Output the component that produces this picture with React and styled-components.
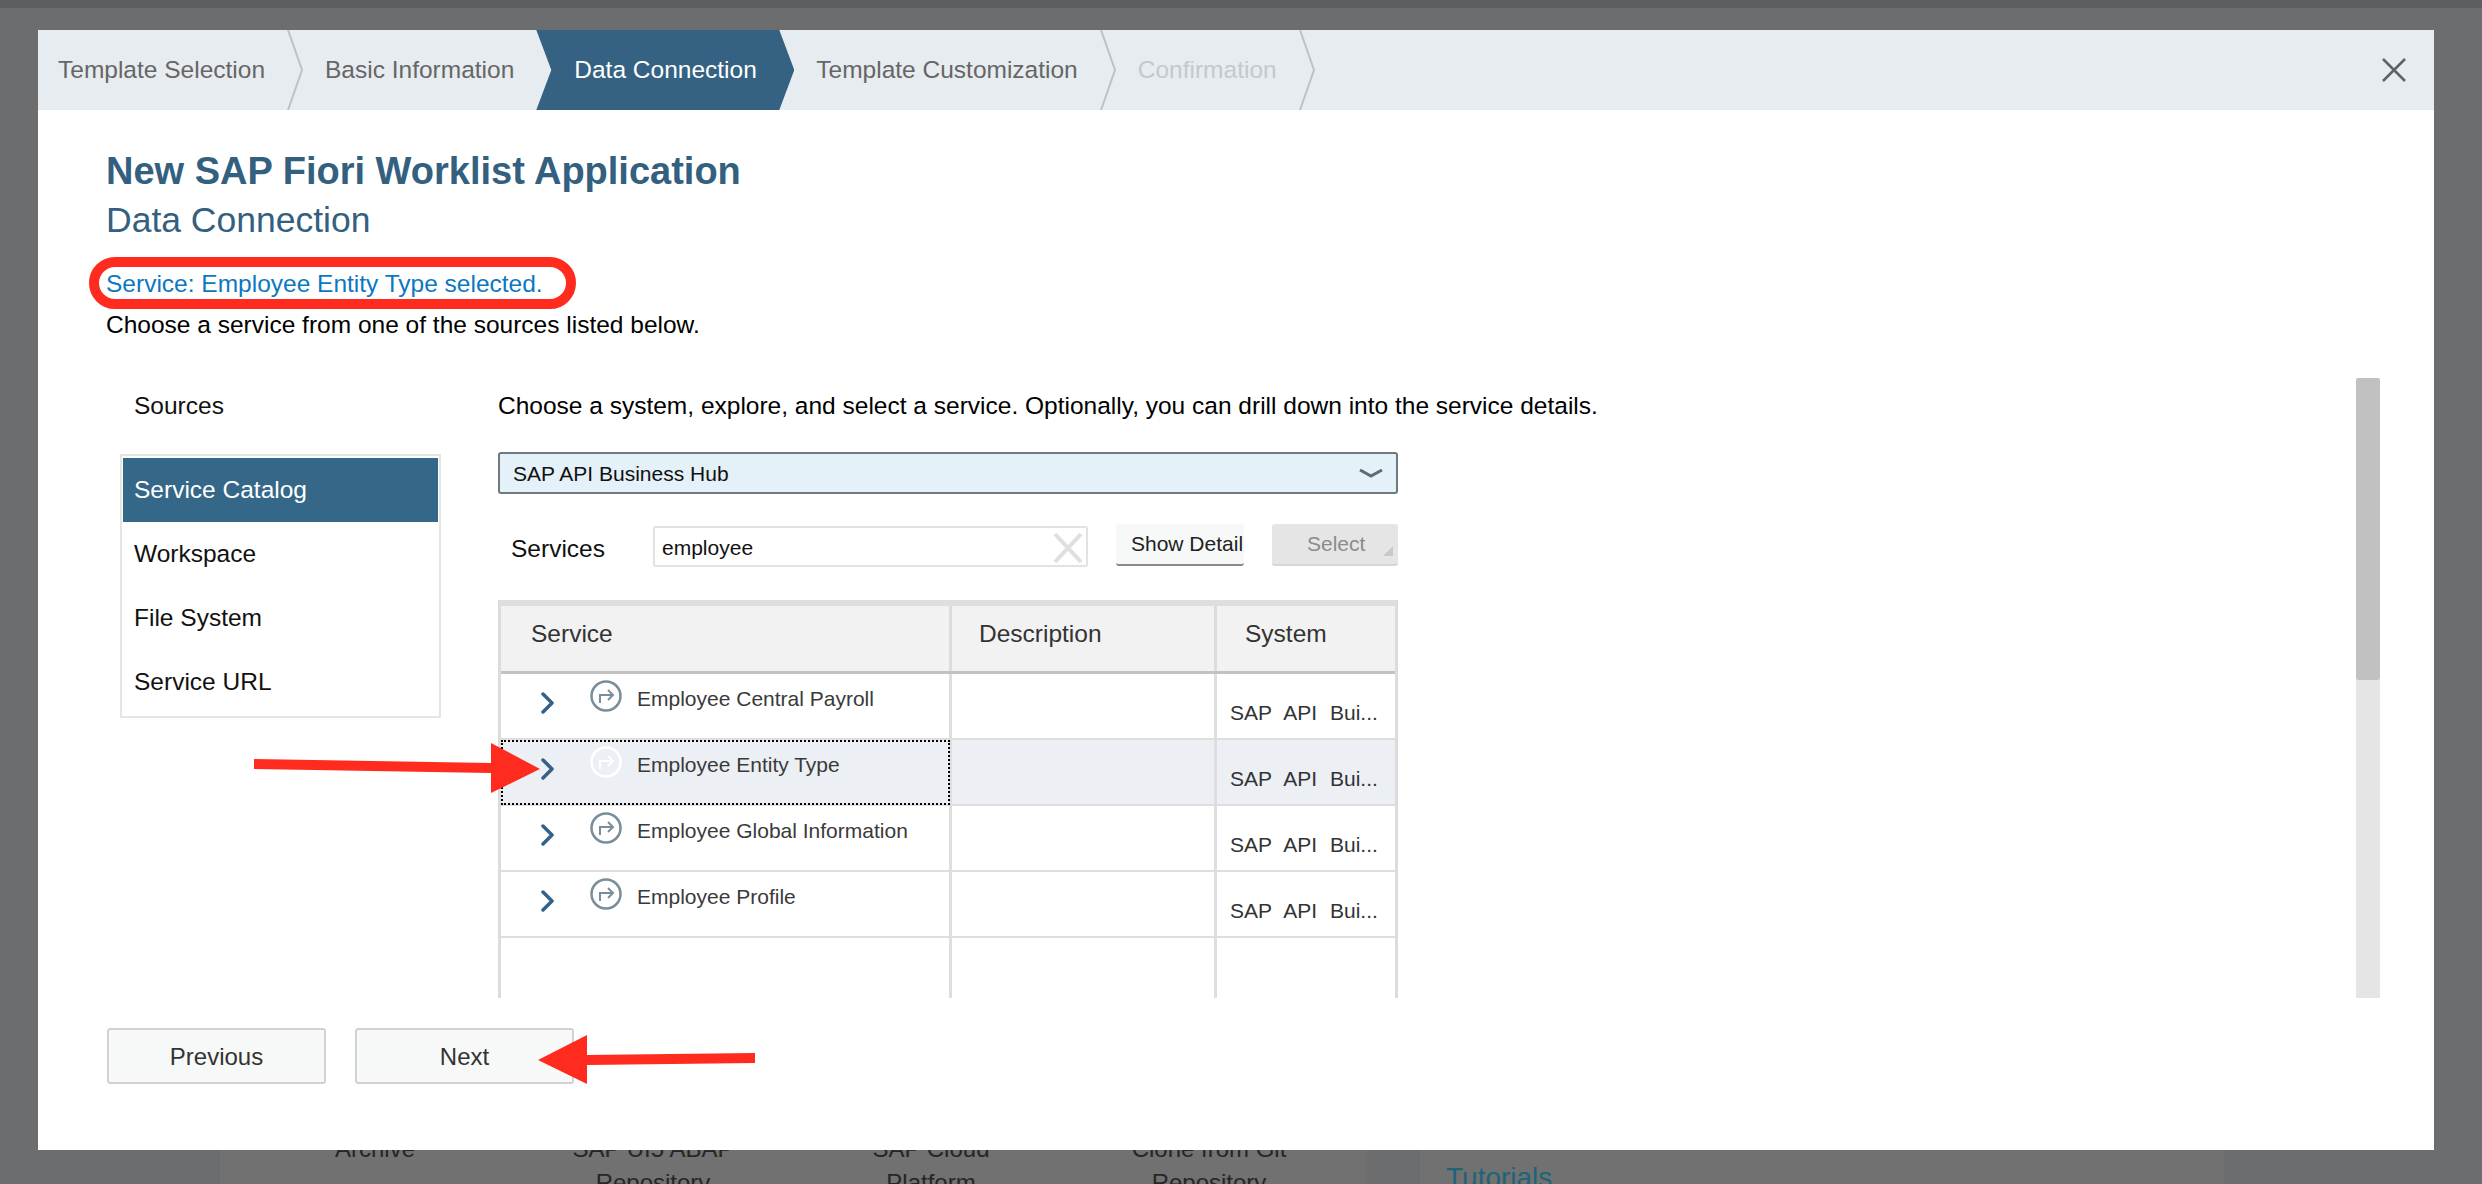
import styled, { createGlobalStyle } from "styled-components";

const GlobalStyle = createGlobalStyle`
  html, body {
    margin: 0;
    padding: 0;
    background: #6c6d6f;
    font-family: "Liberation Sans", Arial, sans-serif;
  }
  * { box-sizing: border-box; }
`;

const Page = styled.div`
  position: relative;
  width: 2482px;
  height: 1184px;
  overflow: hidden;
  display: flex;
  flex-direction: column;
`;

const TopBand = styled.div`
  height: 8px;
  background: #5d5e60;
`;

const Backdrop = styled.div`
  flex: 1;
  display: flex;
  align-items: flex-end;
  gap: 54px;
  padding-left: 220px;
`;

const BackPanel = styled.div`
  width: ${(p) => p.$width}px;
  height: 100px;
  overflow: hidden;
  background: #707170;
  display: flex;
  padding: ${(p) => p.$padding};
`;

const Tile = styled.div`
  width: 278px;
  padding: 0 50px;
  text-align: center;
  font-size: 24px;
  line-height: 34px;
  color: #262626;
`;

const BackLink = styled.div`
  font-size: 28px;
  line-height: 34px;
  color: #1d6478;
`;

const Modal = styled.div`
  position: absolute;
  left: 38px;
  top: 30px;
  width: 2396px;
  height: 1120px;
  background: #fff;
  display: flex;
  flex-direction: column;
`;

const Header = styled.div`
  height: 80px;
  flex-shrink: 0;
  background: #e7ecf0;
  display: flex;
  align-items: center;
  justify-content: space-between;
  padding: 0 28px 0 20px;
`;

const Crumbs = styled.div`
  display: flex;
  align-items: center;
  gap: 22px;
  height: 100%;
`;

const Step = styled.span`
  font-size: 24.5px;
  white-space: nowrap;
  color: ${(p) => (p.$disabled ? "#c6c8ca" : "#666")};
`;

const ActiveStep = styled.div`
  width: 258px;
  height: 100%;
  display: flex;
  align-items: center;
  padding-left: 38px;
  font-size: 24.5px;
  white-space: nowrap;
  color: #fff;
  background: #356282;
  clip-path: polygon(0 0, 243px 0, 258px 50%, 243px 100%, 0 100%, 15px 50%);
`;

const Body = styled.div`
  height: 888px;
  flex-shrink: 0;
  overflow: hidden;
`;

const Intro = styled.div`
  padding: 39px 0 0 68px;
`;

const Title = styled.h1`
  margin: 0;
  font-size: 38px;
  line-height: 44px;
  font-weight: 700;
  color: #346080;
`;

const Subtitle = styled.h2`
  margin: 5px 0 0;
  font-size: 35.5px;
  line-height: 44px;
  font-weight: 400;
  color: #346080;
`;

const Notice = styled.div`
  margin-top: 26px;
  font-size: 24.5px;
  line-height: 32px;
  color: #0a78c2;
`;

const Hint = styled.div`
  margin-top: 9px;
  font-size: 24.5px;
  line-height: 32px;
  color: #000;
`;

const Columns = styled.div`
  display: flex;
  margin-top: 37px;
  height: 620px;
  padding: 0 54px 0 82px;
`;

const Sources = styled.div`
  width: 321px;
  flex-shrink: 0;
  padding-top: 12px;
`;

const SourcesLabel = styled.div`
  padding-left: 14px;
  font-size: 24.5px;
  line-height: 32px;
  color: #111;
`;

const SourceList = styled.div`
  margin-top: 32px;
  padding: 2px 1px;
  border: 2px solid #e6e6e1;
`;

const SourceItem = styled.div`
  height: 64px;
  display: flex;
  align-items: center;
  padding: 0 0 1px 11px;
  font-size: 24.5px;
  color: ${(p) => (p.$active ? "#fff" : "#111")};
  background: ${(p) => (p.$active ? "#356788" : "transparent")};
`;

const Main = styled.div`
  width: 900px;
  margin-left: 57px;
  flex-shrink: 0;
  padding-top: 12px;
`;

const MainHint = styled.div`
  font-size: 24.5px;
  line-height: 32px;
  white-space: nowrap;
  color: #000;
`;

const SystemSelect = styled.div`
  margin-top: 30px;
  height: 42px;
  display: flex;
  align-items: center;
  justify-content: space-between;
  padding: 2px 13px 0;
  background: #e4f1f9;
  border: 2px solid #6f7a80;
  border-radius: 3px;
  font-size: 21px;
  color: #111;
`;

const Toolbar = styled.div`
  margin-top: 30px;
  display: flex;
  align-items: flex-start;
  height: 43px;
`;

const ToolLabel = styled.div`
  width: 155px;
  flex-shrink: 0;
  padding: 9px 0 0 13px;
  font-size: 24.5px;
  line-height: 32px;
  color: #111;
`;

const SearchField = styled.div`
  width: 435px;
  height: 41px;
  margin-top: 2px;
  flex-shrink: 0;
  display: flex;
  align-items: center;
  justify-content: space-between;
  padding: 2px 3px 0 7px;
  border: 2px solid #e2e2e2;
  border-radius: 3px;
  font-size: 21px;
  color: #111;
`;

const ShowDetail = styled.div`
  width: 128px;
  height: 42px;
  margin-left: 28px;
  padding-left: 15px;
  flex-shrink: 0;
  display: flex;
  align-items: center;
  overflow: hidden;
  white-space: nowrap;
  font-size: 21px;
  color: #222;
  background: #f7f9f8;
  border-bottom: 2px solid #8a8a8a;
  border-radius: 3px;
`;

const SelectButton = styled.div`
  position: relative;
  width: 126px;
  height: 42px;
  margin-left: 28px;
  padding-left: 35px;
  flex-shrink: 0;
  display: flex;
  align-items: center;
  font-size: 21px;
  color: #8b8b8b;
  background: #e5e5e5;
  border-bottom: 2px solid #d6d6d6;
  border-radius: 3px;
  &::after {
    content: "";
    position: absolute;
    right: 5px;
    bottom: 8px;
    border-left: 10px solid transparent;
    border-bottom: 10px solid #c9c9c9;
  }
`;

const Table = styled.div`
  margin-top: 33px;
  border-top: 6px solid #dedede;
  border-left: 3px solid #dcdcdc;
  border-right: 3px solid #dcdcdc;
  height: 500px;
`;

const Row = styled.div`
  display: grid;
  grid-template-columns: 451px 265px 178px;
  height: ${(p) => p.$height}px;
  background: ${(p) => (p.$selected ? "#eceff4" : "transparent")};
  border-bottom: 2px solid ${(p) => (p.$last ? "transparent" : "#dedede")};
`;

const HeadRow = styled(Row)`
  background: #f2f2f2;
  border-bottom: 3px solid #c2c2c2;
`;

const HeadCell = styled.div`
  padding: 12px 0 0 ${(p) => p.$pad}px;
  font-size: 24.5px;
  line-height: 32px;
  color: #333;
  border-right: 3px solid ${(p) => (p.$end ? "transparent" : "#dcdcdc")};
`;

const ServiceCell = styled.div`
  position: relative;
  display: flex;
  align-items: flex-start;
  padding-left: 40px;
  border-right: 3px solid #dedede;
  ${(p) =>
    p.$focused &&
    `&::after {
      content: "";
      position: absolute;
      inset: 0 -1px -1px 0;
      border: 2px dotted #000;
    }`}
`;

const ChevronIcon = styled.svg`
  width: 13px;
  height: 22px;
  margin-top: 18px;
  flex-shrink: 0;
`;

const ServiceIcon = styled.svg`
  width: 32px;
  height: 32px;
  margin: 6px 15px 0 36px;
  flex-shrink: 0;
`;

const ServiceName = styled.span`
  font-size: 21px;
  line-height: 50px;
  white-space: nowrap;
  color: #3a3a3a;
`;

const Cell = styled.div`
  border-right: 3px solid ${(p) => (p.$end ? "transparent" : "#dedede")};
`;

const SystemCell = styled.div`
  padding: 24px 0 0 13px;
  font-size: 21px;
  line-height: 30px;
  word-spacing: 7px;
  white-space: nowrap;
  color: #333;
`;

const Scrollbar = styled.div`
  width: 24px;
  height: 620px;
  margin-left: auto;
  flex-shrink: 0;
  background: #e5e5e5;
`;

const ScrollThumb = styled.div`
  height: 302px;
  background: #c1c1c1;
  border-radius: 3px;
`;

const Footer = styled.div`
  display: flex;
  gap: 29px;
  padding: 30px 0 0 69px;
`;

const FooterButton = styled.div`
  width: 219px;
  height: 56px;
  padding-top: 2px;
  display: flex;
  align-items: center;
  justify-content: center;
  font-size: 24px;
  color: #333;
  background: #f7f9f8;
  border: 2px solid #d2d2d2;
  border-radius: 3px;
`;

const Annotations = styled.svg`
  position: absolute;
  left: 0;
  top: 0;
  width: 2482px;
  height: 1184px;
  pointer-events: none;
`;

const rows = [
  { name: "Employee Central Payroll" },
  { name: "Employee Entity Type", selected: true },
  { name: "Employee Global Information" },
  { name: "Employee Profile" },
];

const StepDivider = () => (
  <svg width="16" height="80" viewBox="0 0 16 80">
    <path d="M1 0 L15 40 L1 80" fill="none" stroke="#bcc2c7" strokeWidth="2" />
  </svg>
);

const Chevron = () => (
  <ChevronIcon viewBox="0 0 13 22">
    <path d="M2 2 L11 11 L2 20" fill="none" stroke="#346187" strokeWidth="3.5" strokeLinecap="round" strokeLinejoin="round" />
  </ChevronIcon>
);

const ArrowCircle = ({ color }) => (
  <ServiceIcon viewBox="0 0 32 32">
    <circle cx="16" cy="16" r="14.5" fill="none" stroke={color} strokeWidth="2.5" />
    <path d="M10 23 V15 H23 M18 10 L23 15 L18 20" fill="none" stroke={color} strokeWidth="2" />
  </ServiceIcon>
);

export default function App() {
  return (
    <Page>
      <GlobalStyle />
      <TopBand />
      <Backdrop>
        <BackPanel $width={1146} $padding="48px 0 0 16px">
          <Tile>Archive</Tile>
          <Tile>SAP UI5 ABAP Repository</Tile>
          <Tile>SAP Cloud Platform</Tile>
          <Tile>Clone from Git Repository</Tile>
        </BackPanel>
        <BackPanel $width={804} $padding="77px 0 0 26px">
          <BackLink>Tutorials</BackLink>
        </BackPanel>
      </Backdrop>

      <Modal>
        <Header>
          <Crumbs>
            <Step>Template Selection</Step>
            <StepDivider />
            <Step>Basic Information</Step>
            <ActiveStep>Data Connection</ActiveStep>
            <Step>Template Customization</Step>
            <StepDivider />
            <Step $disabled>Confirmation</Step>
            <StepDivider />
          </Crumbs>
          <svg width="24" height="24" viewBox="0 0 24 24">
            <path d="M1 1 L23 23 M23 1 L1 23" stroke="#5f6163" strokeWidth="2.5" fill="none" />
          </svg>
        </Header>

        <Body>
          <Intro>
            <Title>New SAP Fiori Worklist Application</Title>
            <Subtitle>Data Connection</Subtitle>
            <Notice>Service: Employee Entity Type selected.</Notice>
            <Hint>Choose a service from one of the sources listed below.</Hint>
          </Intro>

          <Columns>
            <Sources>
              <SourcesLabel>Sources</SourcesLabel>
              <SourceList>
                <SourceItem $active>Service Catalog</SourceItem>
                <SourceItem>Workspace</SourceItem>
                <SourceItem>File System</SourceItem>
                <SourceItem>Service URL</SourceItem>
              </SourceList>
            </Sources>

            <Main>
              <MainHint>
                Choose a system, explore, and select a service. Optionally, you can drill down into the service details.
              </MainHint>
              <SystemSelect>
                SAP API Business Hub
                <svg width="24" height="10" viewBox="0 0 24 10">
                  <path d="M1 1 L12 7 L23 1" fill="none" stroke="#5f6b72" strokeWidth="3" />
                </svg>
              </SystemSelect>
              <Toolbar>
                <ToolLabel>Services</ToolLabel>
                <SearchField>
                  employee
                  <svg width="30" height="30" viewBox="0 0 30 30">
                    <path d="M2 1 L28 29 M28 1 L2 29" stroke="#dfdfdf" strokeWidth="4" fill="none" />
                  </svg>
                </SearchField>
                <ShowDetail>Show Detail</ShowDetail>
                <SelectButton>Select</SelectButton>
              </Toolbar>
              <Table>
                <HeadRow $height={68}>
                  <HeadCell $pad={30}>Service</HeadCell>
                  <HeadCell $pad={27}>Description</HeadCell>
                  <HeadCell $pad={28} $end>System</HeadCell>
                </HeadRow>
                {rows.map((row) => (
                  <Row key={row.name} $height={66} $selected={row.selected}>
                    <ServiceCell $focused={row.selected}>
                      <Chevron />
                      <ArrowCircle color={row.selected ? "#fff" : "#7a8d9b"} />
                      <ServiceName>{row.name}</ServiceName>
                    </ServiceCell>
                    <Cell />
                    <SystemCell>SAP API Bui...</SystemCell>
                  </Row>
                ))}
                <Row $height={100} $last>
                  <Cell />
                  <Cell />
                  <Cell $end />
                </Row>
              </Table>
            </Main>

            <Scrollbar>
              <ScrollThumb />
            </Scrollbar>
          </Columns>
        </Body>

        <Footer>
          <FooterButton>Previous</FooterButton>
          <FooterButton>Next</FooterButton>
        </Footer>
      </Modal>

      <Annotations viewBox="0 0 2482 1184">
        <rect x="94" y="262" width="477" height="42" rx="21" fill="none" stroke="#fe2b1e" strokeWidth="10" />
        <polygon points="254,759 491,763 491,743 540,769 491,793 491,773 254,769" fill="#fe2b1e" />
        <polygon points="755,1053 587,1055 587,1035 538,1060 587,1084 587,1065 755,1063" fill="#fe2b1e" />
      </Annotations>
    </Page>
  );
}
